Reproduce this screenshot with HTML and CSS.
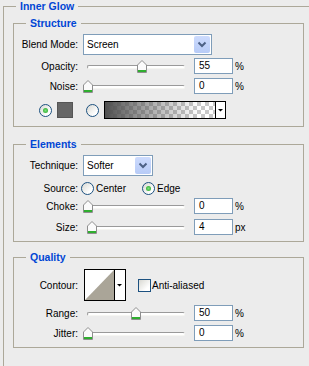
FILE: index.html
```html
<!DOCTYPE html>
<html lang="en">
<head>
    <meta charset="UTF-8">
    <title>Inner Glow</title>
    <link rel="stylesheet" href="styles.css">
</head>
<body>
    <svg class="defs" width="0" height="0">
        <symbol id="thumb" viewBox="0 0 10 13">
            <path d="M5 0.5 L9.5 5 V12.5 H0.5 V5 Z" fill="#fbfbfb" stroke="#8e8e8e"/>
            <rect x="1" y="10" width="8" height="2" fill="#2fae2f"/>
        </symbol>
        <symbol id="chevron" viewBox="0 0 16 17">
            <polyline points="4.5,6.5 8,10 11.5,6.5" fill="none" stroke="#4d6185" stroke-width="2"/>
        </symbol>
        <symbol id="arrow" viewBox="0 0 9 16">
            <path d="M2 7 H7 L4.5 9.5 Z" fill="#000"/>
        </symbol>
    </svg>

    <fieldset class="panel">
        <legend>Inner Glow</legend>

        <fieldset class="group structure">
            <legend>Structure</legend>
            <div class="row row-combo">
                <span class="label">Blend Mode:</span>
                <div class="combo combo-wide">
                    <span class="combo-text">Screen</span>
                    <span class="combo-button"><svg width="16" height="17"><use href="#chevron"/></svg></span>
                </div>
            </div>
            <div class="row row-field opacity">
                <span class="label">Opacity:</span>
                <div class="slider">
                    <div class="track"></div>
                    <svg class="thumb" style="left: 54px" width="10" height="13"><use href="#thumb"/></svg>
                </div>
                <div class="field">55</div>
                <span class="unit">%</span>
            </div>
            <div class="row row-field noise">
                <span class="label">Noise:</span>
                <div class="slider">
                    <div class="track"></div>
                    <svg class="thumb" style="left: 0px" width="10" height="13"><use href="#thumb"/></svg>
                </div>
                <div class="field">0</div>
                <span class="unit">%</span>
            </div>
            <div class="row colors">
                <span class="radio checked"></span>
                <span class="swatch"></span>
                <span class="radio radio-gradient"></span>
                <div class="gradient">
                    <span class="gradient-fill"></span>
                    <span class="picker-arrow"><svg width="9" height="16"><use href="#arrow"/></svg></span>
                </div>
            </div>
        </fieldset>

        <fieldset class="group elements">
            <legend>Elements</legend>
            <div class="row row-combo">
                <span class="label">Technique:</span>
                <div class="combo combo-narrow">
                    <span class="combo-text">Softer</span>
                    <span class="combo-button"><svg width="16" height="17"><use href="#chevron"/></svg></span>
                </div>
            </div>
            <div class="row source">
                <span class="label">Source:</span>
                <span class="option option-center"><span class="radio"></span><span class="option-text">Center</span></span>
                <span class="option"><span class="radio checked"></span><span class="option-text">Edge</span></span>
            </div>
            <div class="row row-field choke">
                <span class="label">Choke:</span>
                <div class="slider">
                    <div class="track"></div>
                    <svg class="thumb" style="left: 0px" width="10" height="13"><use href="#thumb"/></svg>
                </div>
                <div class="field">0</div>
                <span class="unit">%</span>
            </div>
            <div class="row row-field size">
                <span class="label">Size:</span>
                <div class="slider">
                    <div class="track"></div>
                    <svg class="thumb" style="left: 4px" width="10" height="13"><use href="#thumb"/></svg>
                </div>
                <div class="field">4</div>
                <span class="unit">px</span>
            </div>
        </fieldset>

        <fieldset class="group quality">
            <legend>Quality</legend>
            <div class="row contour-row">
                <span class="label">Contour:</span>
                <div class="contour">
                    <svg class="contour-preview" width="29" height="30" viewBox="0 0 29 30">
                        <polygon points="0,30 29,0 29,30" fill="#aaa598"/>
                    </svg>
                    <span class="picker-arrow"><svg width="9" height="30" viewBox="0 -7 9 30"><use href="#arrow" width="9" height="16"/></svg></span>
                </div>
                <span class="checkbox"></span>
                <span class="check-text">Anti-aliased</span>
            </div>
            <div class="row row-field range">
                <span class="label">Range:</span>
                <div class="slider">
                    <div class="track"></div>
                    <svg class="thumb" style="left: 48px" width="10" height="13"><use href="#thumb"/></svg>
                </div>
                <div class="field">50</div>
                <span class="unit">%</span>
            </div>
            <div class="row row-field jitter">
                <span class="label">Jitter:</span>
                <div class="slider">
                    <div class="track"></div>
                    <svg class="thumb" style="left: 0px" width="10" height="13"><use href="#thumb"/></svg>
                </div>
                <div class="field">0</div>
                <span class="unit">%</span>
            </div>
        </fieldset>
    </fieldset>
</body>
</html>
```

FILE: styles.css
```css
html,
body {
    margin: 0;
    overflow: hidden;
}

body {
    font-family: "Liberation Sans", Arial, sans-serif;
    font-size: 10px;
    color: #000;
    background: #ececec;
}

.defs {
    position: absolute;
}

fieldset {
    min-width: 0;
    border: 1px solid #aca899;
}

legend {
    padding: 0 4px;
    font-size: 10.5px;
    font-weight: bold;
    line-height: 13px;
    color: #0046d5;
}

/* the outer group runs on past the window, so no bottom edge shows */
.panel {
    width: 291px;
    margin: 0 0 0 3px;
    padding: 4px 9px 18px;
    border-bottom-width: 0;
}

.panel > legend {
    margin-left: 3px;
}

.group {
    margin: 0;
    padding: 4px 0 7px;
}

.group > legend {
    margin-left: 12px;
}

.elements {
    margin-top: 11px;
    padding-bottom: 6px;
}

.quality {
    margin-top: 9px;
    padding-top: 5px;
    padding-bottom: 6px;
}

.row {
    display: flex;
    align-items: center;
}

.label {
    flex: none;
    width: 64px;
    margin-right: 5px;
    text-align: right;
    white-space: nowrap;
}

/* combo boxes */

.row-combo {
    height: 21px;
}

.combo {
    display: flex;
    box-sizing: border-box;
    height: 21px;
    padding: 1px;
    border: 1px solid #7f9db9;
    background: #fff;
}

.combo-wide {
    width: 129px;
}

.combo-narrow {
    width: 70px;
}

.combo-text {
    flex: 1;
    padding-left: 2px;
    line-height: 17px;
}

.combo-button {
    display: flex;
    width: 16px;
    border-radius: 2px;
    background: linear-gradient(#cddbfd, #b7cbf7);
}

/* slider rows */

.row-field {
    height: 16px;
}

.opacity {
    margin-top: 3px;
}

.noise,
.range,
.jitter {
    margin-top: 4px;
}

.choke {
    margin-top: 2px;
}

.size {
    margin-top: 5px;
}

.slider {
    position: relative;
    flex: none;
    box-sizing: border-box;
    width: 107px;
    height: 16px;
    margin-right: 4px;
    padding: 7px 5px 0 4px;
}

.track {
    height: 2px;
    border: 1px solid;
    border-color: #9a9a9a #f6f6f2 #f6f6f2 #9a9a9a;
    border-radius: 2px;
    background: #fff;
}

.thumb {
    position: absolute;
    top: 2px;
}

.field {
    box-sizing: border-box;
    width: 39px;
    height: 16px;
    padding-left: 4px;
    border: 1px solid #7f9db9;
    background: #fff;
    line-height: 14px;
}

.unit {
    margin-left: 2px;
}

/* radios and swatches */

.radio {
    display: flex;
    flex: none;
    align-items: center;
    justify-content: center;
    box-sizing: border-box;
    width: 13px;
    height: 13px;
    border: 1px solid #1c5180;
    border-radius: 50%;
    background: linear-gradient(135deg, #d8d8d2, #fff 75%);
}

.radio.checked::after {
    content: "";
    width: 5px;
    height: 5px;
    border-radius: 50%;
    background: radial-gradient(#7be27b, #21a121);
}

.colors {
    height: 18px;
    margin-top: 7px;
    padding-left: 25px;
}

.swatch {
    box-sizing: border-box;
    width: 16px;
    height: 16px;
    margin-left: 5px;
    border: 1px solid #555;
    background: #666;
}

.radio-gradient {
    margin-left: 13px;
}

.gradient {
    display: flex;
    box-sizing: border-box;
    width: 122px;
    height: 18px;
    margin-left: 5px;
    border: 1px solid #000;
}

.gradient-fill {
    flex: 1;
    background:
        linear-gradient(to right, rgba(80, 80, 80, 1), rgba(80, 80, 80, 0.55) 35%, rgba(80, 80, 80, 0) 85%),
        repeating-conic-gradient(#c8c8c8 0 25%, #fff 0 50%) 0 0 / 8px 8px;
}

.picker-arrow {
    display: flex;
    width: 9px;
    border-left: 1px solid #000;
    background: #fff;
}

.source {
    height: 15px;
    margin-top: 5px;
}

.source .label {
    margin-right: 3px;
}

.option {
    display: flex;
    align-items: center;
}

.option-center {
    width: 61px;
}

.option-text {
    margin-left: 2px;
}

/* contour */

.contour-row {
    height: 32px;
}

.contour-row .label {
    margin-right: 6px;
}

.contour {
    display: flex;
    box-sizing: border-box;
    width: 42px;
    height: 32px;
    border: 1px solid #000;
    background: #fff;
}

.contour-preview {
    display: block;
    flex: none;
}

.checkbox {
    box-sizing: border-box;
    width: 13px;
    height: 13px;
    margin-left: 12px;
    border: 1px solid #1c5180;
    background: linear-gradient(135deg, #d8d8d2, #fff 75%);
}

.check-text {
    margin-left: 1px;
}
```
